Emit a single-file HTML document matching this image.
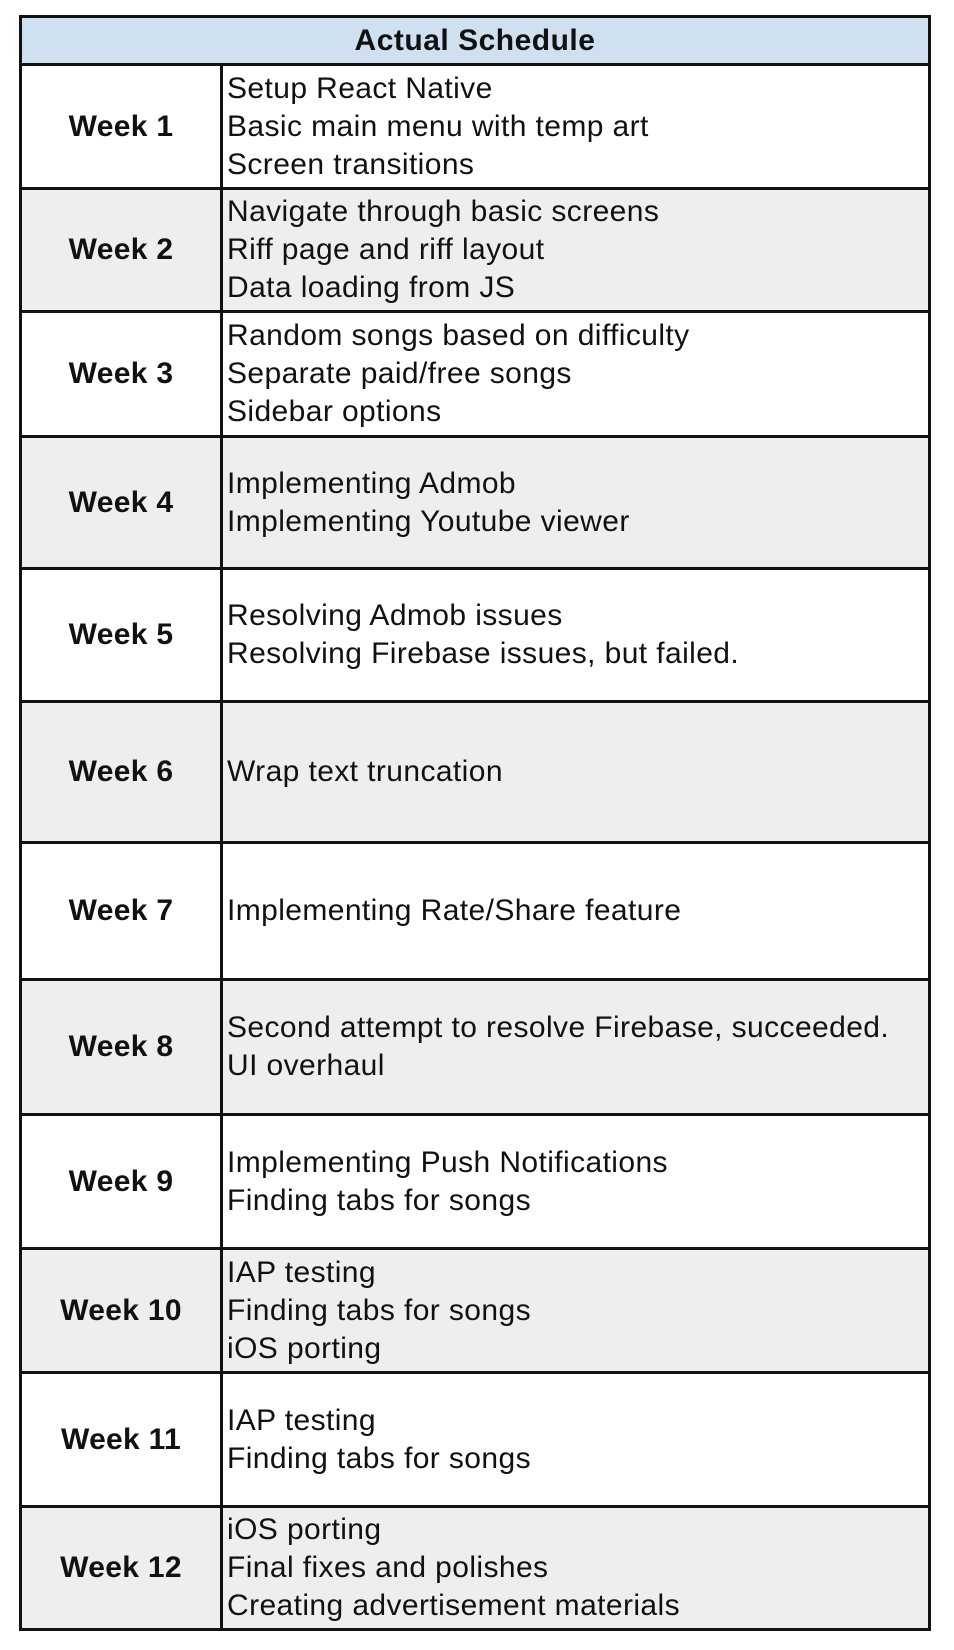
<!DOCTYPE html>
<html><head><meta charset="utf-8"><style>
body{margin:0;background:#fff;width:954px;height:1650px;font-family:"Liberation Sans",Arial,sans-serif;color:#111;}
.t{position:absolute;left:19px;top:15px;width:906px;border:3px solid #111;}
.h{height:45px;background:#cfe0f1;border-bottom:3px solid #111;text-align:center;font-weight:bold;font-size:30px;letter-spacing:0.5px;line-height:45px;}
.r{display:flex;border-bottom:3px solid #111;box-sizing:border-box;}
.r:last-child{border-bottom:none;}
.g{background:#eeeeee;}
.w{width:198px;border-right:3px solid #111;display:flex;align-items:center;justify-content:center;font-weight:bold;font-size:30px;letter-spacing:0.3px;}
.c{flex:1;display:flex;flex-direction:column;justify-content:center;padding-left:4px;font-size:30px;letter-spacing:0.4px;line-height:38px;white-space:nowrap;}
</style></head><body>
<div class="t">
<div class="h">Actual Schedule</div>
<div class="r" style="height:124px"><div class="w">Week 1</div><div class="c"><div>Setup React Native</div><div>Basic main menu with temp art</div><div>Screen transitions</div></div></div>
<div class="r g" style="height:123px"><div class="w">Week 2</div><div class="c"><div>Navigate through basic screens</div><div>Riff page and riff layout</div><div>Data loading from JS</div></div></div>
<div class="r" style="height:125px"><div class="w">Week 3</div><div class="c"><div>Random songs based on difficulty</div><div>Separate paid/free songs</div><div>Sidebar options</div></div></div>
<div class="r g" style="height:132px"><div class="w">Week 4</div><div class="c"><div>Implementing Admob</div><div>Implementing Youtube viewer</div></div></div>
<div class="r" style="height:133px"><div class="w">Week 5</div><div class="c"><div>Resolving Admob issues</div><div>Resolving Firebase issues, but failed.</div></div></div>
<div class="r g" style="height:141px"><div class="w">Week 6</div><div class="c"><div>Wrap text truncation</div></div></div>
<div class="r" style="height:137px"><div class="w">Week 7</div><div class="c"><div>Implementing Rate/Share feature</div></div></div>
<div class="r g" style="height:135px"><div class="w">Week 8</div><div class="c"><div>Second attempt to resolve Firebase, succeeded.</div><div>UI overhaul</div></div></div>
<div class="r" style="height:134px"><div class="w">Week 9</div><div class="c"><div>Implementing Push Notifications</div><div>Finding tabs for songs</div></div></div>
<div class="r g" style="height:124px"><div class="w">Week 10</div><div class="c"><div>IAP testing</div><div>Finding tabs for songs</div><div>iOS porting</div></div></div>
<div class="r" style="height:134px"><div class="w">Week 11</div><div class="c"><div>IAP testing</div><div>Finding tabs for songs</div></div></div>
<div class="r g" style="height:120px"><div class="w">Week 12</div><div class="c"><div>iOS porting</div><div>Final fixes and polishes</div><div>Creating advertisement materials</div></div></div>
</div>
</body></html>
